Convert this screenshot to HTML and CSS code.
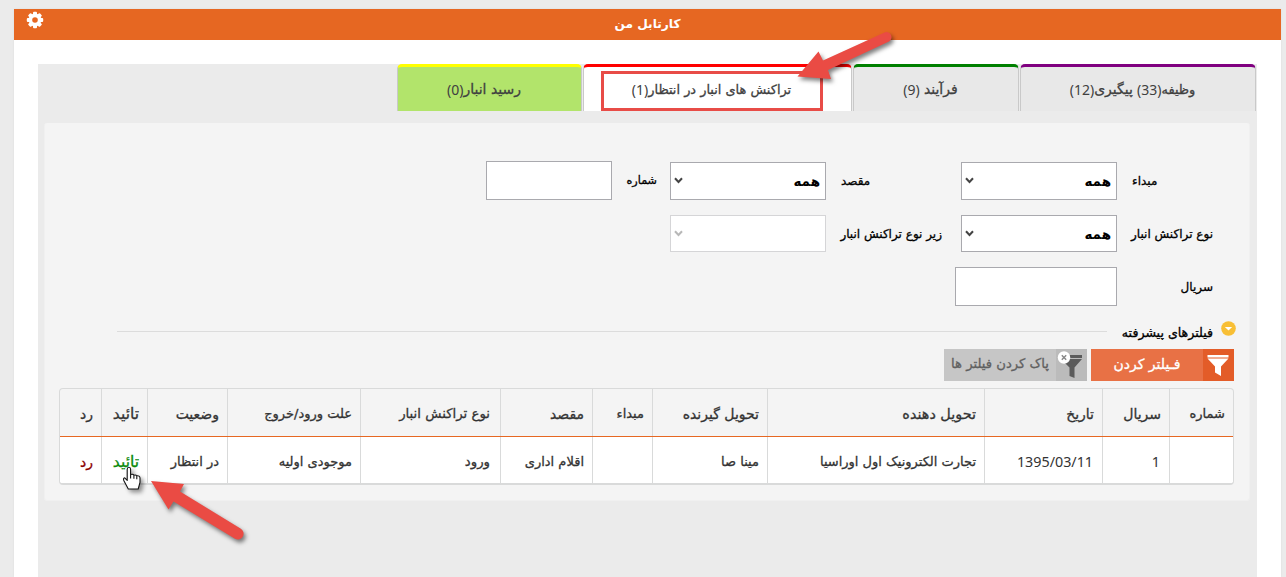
FILE: index.html
```html
<!DOCTYPE html>
<html lang="fa" dir="rtl">
<head>
<meta charset="utf-8">
<title>کارتابل من</title>
<link rel="stylesheet" href="styles.css">
</head>
<body>
<main class="page">
  <header class="titlebar">
    <h1>کارتابل من</h1>
    <svg class="gear" viewBox="0 0 18 18" width="18" height="18"><g fill="#fff"><rect x="7" y="0.8" width="4" height="16.4" rx="1"/><rect x="7" y="0.8" width="4" height="16.4" rx="1" transform="rotate(45 9 9)"/><rect x="7" y="0.8" width="4" height="16.4" rx="1" transform="rotate(90 9 9)"/><rect x="7" y="0.8" width="4" height="16.4" rx="1" transform="rotate(135 9 9)"/><circle cx="9" cy="9" r="6.4"/></g><circle cx="9" cy="9" r="2.8" fill="#e66722"/></svg>
  </header>
  <section class="workspace">
    <nav class="tabs">
      <a class="tab tasks"><span class="t13">وظیفه</span><b>(33)</b>&nbsp;<span class="t14">پیگیری</span><b>(12)</b></a>
      <a class="tab process"><span class="t14">فرآیند</span>&nbsp;<b>(9)</b></a>
      <a class="tab pending"><span class="t13">تراکنش های انبار در انتظار</span><b>(1)</b></a>
      <a class="tab receipt"><span class="t14">رسید انبار</span><b>(0)</b></a>
    </nav>
    <div class="panel">
      <div class="row">
        <label class="c1 lean">مبداء</label>
        <div class="select"><span>همه</span><svg width="9" height="7" viewBox="0 0 9 7"><path d="M1 1.200 4.500 5 8 1.200" fill="none" stroke="currentColor" stroke-width="2"/></svg></div>
        <label class="c2 lean">مقصد</label>
        <div class="select"><span>همه</span><svg width="9" height="7" viewBox="0 0 9 7"><path d="M1 1.200 4.500 5 8 1.200" fill="none" stroke="currentColor" stroke-width="2"/></svg></div>
        <label class="c3">شماره</label>
        <div class="input number"></div>
      </div>
      <div class="row second">
        <label class="c1">نوع تراکنش انبار</label>
        <div class="select short"><span>همه</span><svg width="9" height="7" viewBox="0 0 9 7"><path d="M1 1.200 4.500 5 8 1.200" fill="none" stroke="currentColor" stroke-width="2"/></svg></div>
        <label class="c2">زیر نوع تراکنش انبار</label>
        <div class="select short off"><span></span><svg width="9" height="7" viewBox="0 0 9 7"><path d="M1 1.200 4.500 5 8 1.200" fill="none" stroke="currentColor" stroke-width="2"/></svg></div>
      </div>
      <div class="row third">
        <label class="c1">سریال</label>
        <div class="input serial"></div>
      </div>
      <div class="advanced">
        <svg class="toggle" width="15" height="15" viewBox="0 0 15 15"><circle cx="7.500" cy="7.500" r="7.300" fill="#f8bf35"/><path d="M3.800 6h7.400L7.500 9.600z" fill="#fff"/></svg>
        <span class="legend">فیلترهای پیشرفته</span>
        <i class="rule"></i>
      </div>
      <div class="actions">
        <div class="btn apply"><span class="icon"><svg width="31" height="32" viewBox="0 0 31 32"><path fill="#fff" d="M4.500 6h21v2.500h-21zM4.500 9.500h21l-7.500 8V27l-6-3.500v-6z"/></svg></span><span class="caption">فـیلتر کردن</span></div>
        <div class="btn clear"><span class="icon"><svg width="31" height="32" viewBox="0 0 31 32"><path fill="#5b5b5b" d="M5 6h21v3H5zM5 10h21l-7.500 8.500V29l-5-2v-8.500z"/><circle cx="8" cy="8.500" r="6.200" fill="#fff"/><path d="m5.800 6.300 4.400 4.400m0-4.400-4.400 4.400" stroke="#888" stroke-width="1.500"/></svg></span><span class="caption">پاک کردن فیلتر ها</span></div>
      </div>
      <div class="grid">
        <div class="cells head">
          <span>شماره</span><span class="t14">سریال</span><span class="t14">تاریخ</span><span class="t14 wide">تحویل دهنده</span><span class="t14">تحویل گیرنده</span><span>مبداء</span><span class="t14">مقصد</span><span class="kind">نوع تراکنش انبار</span><span>علت ورود/خروج</span><span class="t14">وضعیت</span><span class="t15">تائید</span><span class="t14">رد</span>
        </div>
        <div class="cells data">
          <span></span><span class="num">1</span><span class="num">1395/03/11</span><span>تجارت الکترونیک اول اوراسیا</span><span>مینا صا</span><span></span><span>اقلام اداری</span><span class="kind">ورود</span><span>موجودی اولیه</span><span>در انتظار</span><span class="ok t15">تائید</span><span class="no t14">رد</span>
        </div>
      </div>
    </div>
  </section>
</main>
<div class="highlight"></div>
<svg class="marks" width="1286" height="577" viewBox="0 0 1286 577">
  <g class="arrow">
    <path d="M797.500 76.500 818.500 51.500 823 60.500 884 32.800A5 5 0 0 1 889 41.500L828 70 831 79z"/>
    <path d="M151 481 184 484 180 491.500 240.500 528.500A5.200 5.200 0 0 1 235 538.800L173.500 501.500 168.500 509.500z"/>
  </g>
  <path class="hand" d="M127.200 469.200q0-2 1.700-2t1.700 2v5.300q2.700-.8 3.200.7 2.300-.7 2.800.7 3.300-.5 3.400 2v4.400l-1.800 6.700H128.300l-4.400-8.300q-1-2.500.8-2.900l2.500 2.600zM130.600 474.500v4M133.900 475.200v3.500M136.800 476v3.200"/>
</svg>
</body>
</html>
```
FILE: styles.css
```css
* { box-sizing: border-box; }
body {
  margin: 0;
  height: 577px;
  overflow: hidden;
  background: #ebebeb;
  color: #333;
  font: 13px "DejaVu Sans", sans-serif;
  -webkit-text-stroke: .3px currentColor;
}
.page {
  width: 1267px;
  height: 568px;
  margin: 9px 5px 0 0;
  background: #fff;
  box-shadow: 0 0 2px #ddd;
}
.titlebar {
  display: flex;
  align-items: flex-start;
  height: 31px;
  padding-left: 12px;
  background: #e66722;
  color: #fff;
}
.titlebar h1 {
  flex: 1;
  margin: 0 0 0 -30px;
  font-size: 12.2px;
  line-height: 31px;
  text-align: center;
  -webkit-text-stroke: 0;
}
.gear { margin-top: 2px; }
.workspace {
  width: 1219px;
  height: 513px;
  margin: 24px 24px 0 0;
  background: #ebebeb;
}
.tabs { display: flex; gap: 1px; padding-right: 1px; }
.tab {
  display: flex;
  justify-content: center;
  align-items: center;
  height: 47px;
  border: 1px solid #c9c9c9;
  border-top: 3px solid;
  border-bottom: 0;
  border-radius: 5px 5px 0 0;
  background: #e8e8e8;
  color: #404040;
}
.tab b, .num { font: 14px "Noto Sans", sans-serif; -webkit-text-stroke: 0; }
.tasks { width: 236px; padding-right: 11px; border-top-color: #800080; }
.process { width: 166px; padding-right: 11px; border-top-color: #008000; }
.pending { width: 269px; padding-right: 12px; border-top-color: red; background: #fff; }
.receipt { width: 185px; padding-right: 11px; border-top-color: #ff0; background: #b2e46b; }
.t13 { font-size: 12.9px; }
.t14 { font-size: 14px; }
.t15 { font-size: 15.5px; }
.panel {
  height: 378px;
  margin: 12px 7px 0 6px;
  padding-top: 38px;
  border: 1px solid #f0f0f0;
  border-top: 0;
  border-radius: 3px;
  background: #f4f4f4;
}
.row { display: flex; align-items: center; height: 39px; padding-right: 36px; color: #000; }
.row label { font-size: 12px; white-space: nowrap; }
.second { height: 37px; margin-top: 15px; }
.third { margin-top: 15px; }
.c1 { width: 81px; margin-left: 15px; }
.c2 { width: 101px; margin: 0 19px 0 15px; }
.c3 { width: 31px; margin: 0 13px 0 14px; }
.row .c3 { font-size: 11.2px; }
.lean { text-align: left; }
.select, .input { border: 1px solid #a9a9ae; background: #fff; }
.select {
  display: flex;
  justify-content: space-between;
  align-items: center;
  width: 156px;
  height: 38px;
  padding: 0 5px 0 3px;
  font-size: 13.5px;
  font-weight: bold;
  -webkit-text-stroke: 0;
}
.select svg { color: #444; }
.short { height: 37px; }
.off { border-color: #d5d5d7; }
.off svg { color: #b8b8b8; }
.input { height: 39px; }
.number { width: 126px; }
.serial { width: 162px; }
.advanced { display: flex; align-items: flex-start; margin-top: 15px; padding-right: 13px; height: 28px; color: #000; }
.legend { margin: 4px 8px 0 15px; font-size: 12.6px; white-space: nowrap; }
.rule { width: 990px; height: 1px; margin-top: 10px; background: #dcdcdc; }
.actions { display: flex; gap: 4px; padding-right: 15px; }
.btn { display: flex; width: 143px; height: 32px; }
.icon { width: 31px; height: 32px; }
.icon svg { display: block; }
.caption { flex: 1; text-align: center; line-height: 30px; white-space: nowrap; }
.apply { background: #e87145; color: #fff; font-size: 14px; }
.apply .icon { background: #e35c28; }
.clear { background: #c6c6c6; color: #606060; font-size: 13.2px; }
.clear .icon { background: #bbb; }
.grid {
  width: 1175px;
  height: 97px;
  margin: 7px 15px 0 0;
  border: 1px solid #d9dada;
  border-bottom-width: 2px;
  border-radius: 4px;
  overflow: hidden;
}
.cells {
  display: grid;
  grid-template-columns: 64px 67px 118px 217px 115px 60px 92px 140px 133px 80px 46px 41px;
}
.cells span {
  display: flex;
  align-items: center;
  height: 100%;
  padding: 2px 8px 0 0;
  border-left: 1px solid #d9dada;
  white-space: nowrap;
}
.cells span:last-child { border-left: 0; }
.cells .kind { padding-right: 10px; font-size: 13.3px; }
.head { height: 48px; border-bottom: 1px solid #e66722; }
.head .wide { font-size: 14.4px; }
.data { height: 47px; background: #fff; }
.data .num { padding-right: 9px; font-size: 14.3px; }
.ok { color: #0a8a0a; }
.no { color: #8b0000; }
.highlight {
  position: absolute;
  left: 601px;
  top: 71px;
  width: 222px;
  height: 40px;
  border: 3px solid #e84c47;
}
.marks { position: absolute; left: 0; top: 0; }
.arrow { fill: #ea4b44; filter: drop-shadow(2px 3px 2px rgba(0, 0, 0, .5)); }
.hand { fill: #fff; stroke: #111; stroke-width: 1.1; stroke-linejoin: round; filter: drop-shadow(3px 3px 2px rgba(0, 0, 0, .4)); }
```
